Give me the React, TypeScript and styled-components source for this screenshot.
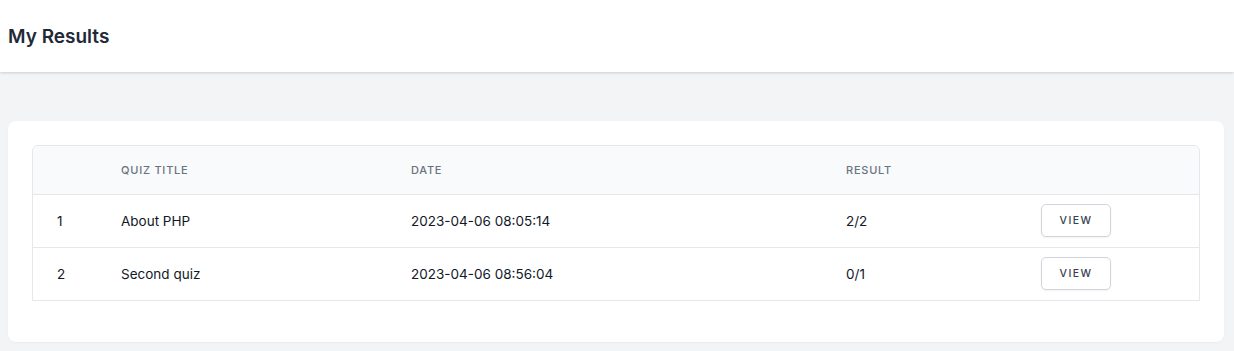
import React from 'react';
import styled, { createGlobalStyle } from 'styled-components';

const GlobalStyle = createGlobalStyle`
  html, body {
    margin: 0;
    padding: 0;
    background: #f3f4f6;
    font-family: Inter, 'Noto Sans', sans-serif;
    -webkit-font-smoothing: antialiased;
  }
`;

const Header = styled.header`
  height: 72px;
  display: flex;
  align-items: center;
  padding: 2px 8px 0;
  box-sizing: border-box;
  background: #ffffff;
  box-shadow: 0 1px 3px rgba(0, 0, 0, 0.1), 0 1px 2px rgba(0, 0, 0, 0.06);
`;

const Title = styled.h2`
  margin: 0;
  font-size: 19px;
  font-weight: 600;
  line-height: 28px;
  color: #1f2937;
`;

const Main = styled.main`
  padding: 49px 10px 10px 8px;
`;

const Card = styled.div`
  background: #ffffff;
  border-radius: 8px;
  padding: 24px 24px 41px;
  box-shadow: 0 1px 2px rgba(0, 0, 0, 0.04);
`;

const TableWrap = styled.div`
  border: 1px solid #e5e7eb;
  border-radius: 6px 6px 0 0;
  overflow: hidden;
`;

const Table = styled.table`
  width: 100%;
  border-collapse: collapse;
  table-layout: fixed;
`;

const HeadRow = styled.tr`
  background: #f9fafb;
  height: 48px;
`;

const Th = styled.th`
  padding: 0 24px;
  text-align: left;
  font-size: 11px;
  font-weight: 500;
  letter-spacing: 0.07em;
  text-transform: uppercase;
  color: #6b7280;
`;

const Row = styled.tr`
  height: 53px;
  border-top: 1px solid #e5e7eb;
`;

const Td = styled.td`
  padding: 0 24px;
  font-size: 13.5px;
  color: #111827;
  white-space: nowrap;
`;

const ViewButton = styled.button`
  height: 33px;
  width: 70px;
  background: #ffffff;
  border: 1px solid #d1d5db;
  border-radius: 5px;
  box-shadow: 0 1px 2px rgba(0, 0, 0, 0.05);
  font-family: inherit;
  font-size: 10.5px;
  font-weight: 500;
  letter-spacing: 0.14em;
  text-transform: uppercase;
  color: #374151;
  cursor: pointer;
`;

interface Result {
  id: number;
  title: string;
  date: string;
  result: string;
}

const results: Result[] = [
  { id: 1, title: 'About PHP', date: '2023-04-06 08:05:14', result: '2/2' },
  { id: 2, title: 'Second quiz', date: '2023-04-06 08:56:04', result: '0/1' },
];

const App: React.FC = () => (
  <>
    <GlobalStyle />
    <Header>
      <Title>My Results</Title>
    </Header>
    <Main>
      <Card>
        <TableWrap>
          <Table>
            <colgroup>
              <col style={{ width: 64 }} />
              <col style={{ width: 290 }} />
              <col style={{ width: 435 }} />
              <col style={{ width: 195 }} />
              <col />
            </colgroup>
            <thead>
              <HeadRow>
                <Th />
                <Th>Quiz Title</Th>
                <Th>Date</Th>
                <Th>Result</Th>
                <Th />
              </HeadRow>
            </thead>
            <tbody>
              {results.map((r) => (
                <Row key={r.id}>
                  <Td>{r.id}</Td>
                  <Td>{r.title}</Td>
                  <Td>{r.date}</Td>
                  <Td>{r.result}</Td>
                  <Td>
                    <ViewButton>View</ViewButton>
                  </Td>
                </Row>
              ))}
            </tbody>
          </Table>
        </TableWrap>
      </Card>
    </Main>
  </>
);

export default App;
